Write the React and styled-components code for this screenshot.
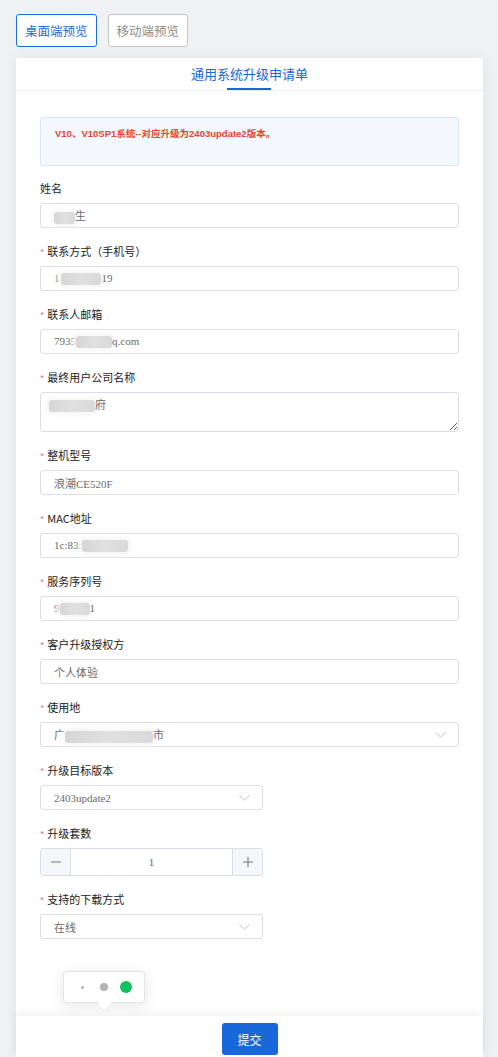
import React from "react";
import styled, { createGlobalStyle } from "styled-components";

const GlobalStyle = createGlobalStyle`
    html, body {
        margin: 0;
        padding: 0;
        background: #f0f1f3;
        font-family: "Noto Sans CJK SC", "Noto Sans", sans-serif;
    }
    * {
        box-sizing: border-box;
    }
`;

const Page = styled.div`
    padding: 14px 0 0 16px;
    width: 483px;
    min-height: 100vh;
    display: flex;
    flex-direction: column;
`;

const Toolbar = styled.div`
    display: flex;
    gap: 11px;
    margin-bottom: 11px;
`;

const ModeButton = styled.button`
    height: 33px;
    padding: 0 8px;
    font-family: "Noto Sans CJK SC", sans-serif;
    font-size: 12.5px;
    background: #fff;
    border-radius: 3px;
    border: 1px solid ${(p) => (p.$active ? "#1a6ddb" : "#c4c4c4")};
    color: ${(p) => (p.$active ? "#1a6ddb" : "#8a8a8a")};
    cursor: pointer;
`;

const Card = styled.div`
    position: relative;
    flex: 1;
    background: #fff;
    border-radius: 2px 2px 0 0;
    box-shadow: 0 0 14px rgba(0, 0, 0, 0.07);
    display: flex;
    flex-direction: column;
`;

const Header = styled.div`
    height: 33px;
    border-bottom: 1px solid #ebedf0;
    display: flex;
    justify-content: center;
`;

const Title = styled.div`
    position: relative;
    font-size: 13px;
    color: #1a66d4;
    line-height: 32px;

    &::after {
        content: "";
        position: absolute;
        left: 50%;
        bottom: 0;
        width: 44px;
        height: 2px;
        margin-left: -22px;
        background: #1a66d4;
    }
`;

const Body = styled.div`
    flex: 1;
    padding: 26px 24px 0 24px;
`;

const Notice = styled.div`
    height: 49px;
    padding: 8px 14px;
    background: #f3f7fe;
    border: 1px solid #d9e4f7;
    border-radius: 3px;
    color: #e8432e;
    font-family: "Liberation Sans", "Noto Sans CJK SC", sans-serif;
    font-weight: bold;
    font-size: 9.5px;
    margin-bottom: 13px;
`;

const Field = styled.div`
    margin-bottom: 14px;
`;

const Label = styled.div`
    height: 18px;
    line-height: 18px;
    font-size: 11px;
    color: #222;
    margin-bottom: 6px;

    &::before {
        content: "*";
        color: #f56c6c;
        font-size: 9px;
        margin-right: 3px;
        display: ${(p) => (p.$required ? "inline" : "none")};
    }
`;

const Input = styled.div`
    height: 25px;
    width: ${(p) => p.$width || "100%"};
    border: 1px solid #dcdee6;
    border-radius: 3px;
    padding: 0 12px 0 13px;
    display: flex;
    align-items: center;
    justify-content: space-between;
    font-family: "Liberation Serif", "Noto Sans CJK SC", serif;
    font-size: 11px;
    color: #6b6b6b;
    white-space: nowrap;
`;

const TextArea = styled.div`
    height: 40px;
    border: 1px solid #dcdee6;
    border-radius: 3px;
    padding: 3px 8px;
    font-family: "Liberation Serif", "Noto Sans CJK SC", serif;
    font-size: 11px;
    color: #6b6b6b;
    resize: vertical;
    overflow: auto;
`;

const Redact = styled.span`
    display: inline-block;
    width: ${(p) => p.$w}px;
    height: 12px;
    margin: 0 ${(p) => p.$m || 0}px;
    vertical-align: middle;
    background: linear-gradient(90deg, #d6d6d6, #e0e0e0 50%, #d9d9d9);
    border-radius: 3px;
    box-shadow: 0 0 5px 3px #f6f6f6;
`;

const Stepper = styled.div`
    width: 223px;
    height: 28px;
    display: grid;
    grid-template-columns: 30px 1fr 30px;
    border: 1px solid #dcdee6;
    border-radius: 3px;
    overflow: hidden;
`;

const StepButton = styled.div`
    display: flex;
    align-items: center;
    justify-content: center;
    background: #f5f6fa;
    border-left: ${(p) => (p.$right ? "1px solid #dcdee6" : "none")};
    border-right: ${(p) => (p.$right ? "none" : "1px solid #dcdee6")};
`;

const StepValue = styled.div`
    display: flex;
    align-items: center;
    justify-content: center;
    font-family: "Liberation Serif", serif;
    font-size: 11px;
    color: #666;
`;

const Footer = styled.div`
    height: 41px;
    padding-top: 7px;
    display: flex;
    justify-content: center;
    background: #fff;
    box-shadow: 0 -3px 8px rgba(0, 0, 0, 0.06);
    position: relative;
`;

const SubmitButton = styled.button`
    width: 56px;
    height: 32px;
    border: none;
    border-radius: 3px;
    background: #1868dc;
    color: #fff;
    font-family: "Noto Sans CJK SC", sans-serif;
    font-size: 12px;
    cursor: pointer;
`;

const Popover = styled.div`
    position: absolute;
    left: 47px;
    top: 913px;
    width: 82px;
    height: 32px;
    background: #fff;
    border: 1px solid #e4e4e4;
    border-radius: 4px;
    box-shadow: 0 2px 14px rgba(0, 0, 0, 0.1);
    display: flex;
    align-items: center;
    justify-content: center;
    z-index: 2;

    &::after {
        content: "";
        position: absolute;
        left: 35px;
        bottom: -8px;
        width: 10px;
        height: 10px;
        background: #fff;
        transform: rotate(45deg);
        border-right: 1px solid #e8e8e8;
        border-bottom: 1px solid #e8e8e8;
    }
`;

const DotSlot = styled.div`
    width: 22px;
    display: flex;
    justify-content: center;
`;

const Dot = styled.span`
    width: ${(p) => p.$size}px;
    height: ${(p) => p.$size}px;
    border-radius: 50%;
    background: ${(p) => p.$color};
`;

const Chevron = () => (
    <svg width="11" height="6" viewBox="0 0 11 6" fill="none">
        <path d="M0.5 0.5 L5.5 5 L10.5 0.5" stroke="#c0c4cc" strokeWidth="1" />
    </svg>
);

const Minus = () => (
    <svg width="12" height="12" viewBox="0 0 12 12">
        <path d="M1 6 H11" stroke="#777" strokeWidth="1.1" />
    </svg>
);

const Plus = () => (
    <svg width="12" height="12" viewBox="0 0 12 12">
        <path d="M1 6 H11 M6 1 V11" stroke="#777" strokeWidth="1.1" />
    </svg>
);

const App = () => {
    return (
        <>
            <GlobalStyle />
            <Page>
                <Toolbar>
                    <ModeButton $active>桌面端预览</ModeButton>
                    <ModeButton>移动端预览</ModeButton>
                </Toolbar>
                <Card>
                    <Header>
                        <Title>通用系统升级申请单</Title>
                    </Header>
                    <Body>
                        <Notice>V10、V10SP1系统--对应升级为2403update2版本。</Notice>

                        <Field>
                            <Label>姓名</Label>
                            <Input>
                                <span>
                                    <Redact $w={21} />生
                                </span>
                            </Input>
                        </Field>

                        <Field>
                            <Label $required>联系方式（手机号）</Label>
                            <Input>
                                <span>
                                    1<Redact $w={40} $m={1} />19
                                </span>
                            </Input>
                        </Field>

                        <Field>
                            <Label $required>联系人邮箱</Label>
                            <Input>
                                <span>
                                    7935<Redact $w={36} />q.com
                                </span>
                            </Input>
                        </Field>

                        <Field>
                            <Label $required>最终用户公司名称</Label>
                            <TextArea>
                                <Redact $w={46} />府
                            </TextArea>
                        </Field>

                        <Field>
                            <Label $required>整机型号</Label>
                            <Input>浪潮CE520F</Input>
                        </Field>

                        <Field>
                            <Label $required>MAC地址</Label>
                            <Input>
                                <span>
                                    1c:83:<Redact $w={46} />
                                </span>
                            </Input>
                        </Field>

                        <Field>
                            <Label $required>服务序列号</Label>
                            <Input>
                                <span>
                                    9<Redact $w={30} />1
                                </span>
                            </Input>
                        </Field>

                        <Field>
                            <Label $required>客户升级授权方</Label>
                            <Input>个人体验</Input>
                        </Field>

                        <Field>
                            <Label $required>使用地</Label>
                            <Input>
                                <span>
                                    广<Redact $w={88} />市
                                </span>
                                <Chevron />
                            </Input>
                        </Field>

                        <Field>
                            <Label $required>升级目标版本</Label>
                            <Input $width="223px">
                                2403update2
                                <Chevron />
                            </Input>
                        </Field>

                        <Field>
                            <Label $required>升级套数</Label>
                            <Stepper>
                                <StepButton>
                                    <Minus />
                                </StepButton>
                                <StepValue>1</StepValue>
                                <StepButton $right>
                                    <Plus />
                                </StepButton>
                            </Stepper>
                        </Field>

                        <Field>
                            <Label $required>支持的下载方式</Label>
                            <Input $width="223px">
                                在线
                                <Chevron />
                            </Input>
                        </Field>
                    </Body>

                    <Popover>
                        <DotSlot>
                            <Dot $size={3} $color="#b3b3b3" />
                        </DotSlot>
                        <DotSlot>
                            <Dot $size={8} $color="#b3b3b3" />
                        </DotSlot>
                        <DotSlot>
                            <Dot $size={12} $color="#13c060" />
                        </DotSlot>
                    </Popover>

                    <Footer>
                        <SubmitButton>提交</SubmitButton>
                    </Footer>
                </Card>
            </Page>
        </>
    );
};

export default App;
